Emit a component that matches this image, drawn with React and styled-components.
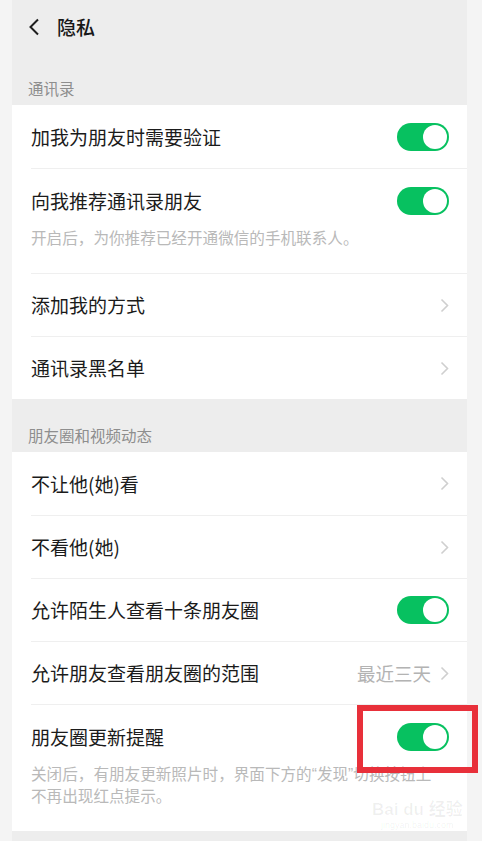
import React from "react";
import styled, { createGlobalStyle } from "styled-components";

const Global = createGlobalStyle`
  html, body { margin: 0; padding: 0; background: #f4f4f4; }
  body { font-family: "Noto Sans CJK SC", "Noto Sans", sans-serif; -webkit-font-smoothing: antialiased; }
`;

const Page = styled.div`
  position: relative;
  margin-left: 12px;
  width: 455px;
  min-height: 841px;
  background: #ededed;
`;

const Header = styled.div`
  height: 53px;
  display: flex;
  align-items: center;
  padding-left: 16px;
  gap: 17px;
`;

const Title = styled.div`
  font-size: 19px;
  font-weight: 500;
  color: #181818;
  line-height: 26px;
`;

const SectionLabel = styled.div`
  height: ${(p) => p.$h}px;
  box-sizing: border-box;
  display: flex;
  align-items: flex-end;
  padding: 0 16px 7px;
  font-size: 15.5px;
  line-height: 20px;
  color: #8e8e8e;
`;

const Group = styled.div`
  background: #ffffff;
`;

const Row = styled.div`
  padding-left: 19px;
`;

const RowInner = styled.div`
  border-top: ${(p) => (p.$first ? "none" : "1px solid #efefef")};
  padding: ${(p) => (p.$sub ? "18px 18px 26px 0" : "0 18px 0 0")};
  min-height: ${(p) => (p.$sub ? 0 : 63)}px;
  box-sizing: border-box;
  display: flex;
  flex-direction: column;
  justify-content: center;
`;

const Line = styled.div`
  display: flex;
  align-items: center;
  justify-content: space-between;
  height: 28px;
`;

const Label = styled.div`
  font-size: 19px;
  color: #1b1b1b;
  line-height: 28px;
`;

const Sub = styled.div`
  margin-top: 12px;
  font-size: 15.6px;
  line-height: 20px;
  color: #b9b9b9;
  white-space: nowrap;
`;

const Quote = styled.span`
  font-family: "Liberation Sans", sans-serif;
`;

const Right = styled.div`
  display: flex;
  align-items: center;
  gap: 9px;
`;

const Value = styled.span`
  font-size: 18.5px;
  color: #b3b3b3;
`;

const Toggle = styled.div`
  width: 52px;
  height: 28px;
  border-radius: 14px;
  background: #07c160;
  position: relative;
  flex: none;
  &::after {
    content: "";
    position: absolute;
    right: 2px;
    top: 2px;
    width: 24px;
    height: 24px;
    border-radius: 50%;
    background: #fff;
  }
`;

const Highlight = styled.div`
  position: absolute;
  left: 345px;
  top: 705px;
  width: 121px;
  height: 68px;
  box-sizing: border-box;
  border: 6px solid #e8303a;
  pointer-events: none;
`;

const Watermark = styled.div`
  position: absolute;
  left: 360px;
  top: 800px;
  text-align: center;
  white-space: nowrap;
  color: rgba(0, 0, 0, 0.06);
  font-family: "Liberation Sans", "Noto Sans CJK SC", sans-serif;
  pointer-events: none;
`;

const WmTop = styled.div`
  font-size: 17px;
  font-weight: 700;
  line-height: 20px;
`;

const WmBottom = styled.div`
  font-size: 9px;
  line-height: 11px;
`;

const Back = () => (
  <svg width="12" height="18" viewBox="0 0 12 18">
    <path d="M10 1.5 L2.5 9 L10 16.5" fill="none" stroke="#1e1e1e" strokeWidth="2" />
  </svg>
);

const Chevron = () => (
  <svg width="9" height="15" viewBox="0 0 9 15">
    <path d="M1.5 1.5 L7.5 7.5 L1.5 13.5" fill="none" stroke="#cfcfcf" strokeWidth="1.6" />
  </svg>
);

function Item({ label, toggle, value, sub, first }) {
  return (
    <Row>
      <RowInner $first={first} $sub={!!sub}>
        <Line>
          <Label>{label}</Label>
          {toggle ? (
            <Toggle />
          ) : (
            <Right>
              {value && <Value>{value}</Value>}
              <Chevron />
            </Right>
          )}
        </Line>
        {sub && <Sub>{sub}</Sub>}
      </RowInner>
    </Row>
  );
}

export default function App() {
  return (
    <>
      <Global />
      <Page>
        <Header>
          <Back />
          <Title>隐私</Title>
        </Header>
        <SectionLabel $h={52}>通讯录</SectionLabel>
        <Group>
          <Item first label="加我为朋友时需要验证" toggle />
          <Item label="向我推荐通讯录朋友" toggle sub="开启后，为你推荐已经开通微信的手机联系人。" />
          <Item label="添加我的方式" />
          <Item label="通讯录黑名单" />
        </Group>
        <SectionLabel $h={53}>朋友圈和视频动态</SectionLabel>
        <Group>
          <Item first label="不让他(她)看" />
          <Item label="不看他(她)" />
          <Item label="允许陌生人查看十条朋友圈" toggle />
          <Item label="允许朋友查看朋友圈的范围" value="最近三天" />
          <Item
            label="朋友圈更新提醒"
            toggle
            sub={
              <>
                关闭后，有朋友更新照片时，界面下方的<Quote>“</Quote>发现<Quote>”</Quote>切换按钮上
                <br />
                不再出现红点提示。
              </>
            }
          />
        </Group>
        <Watermark>
          <WmTop>Bai du 经验</WmTop>
          <WmBottom>jingyan.baidu.com</WmBottom>
        </Watermark>
        <Highlight />
      </Page>
    </>
  );
}
